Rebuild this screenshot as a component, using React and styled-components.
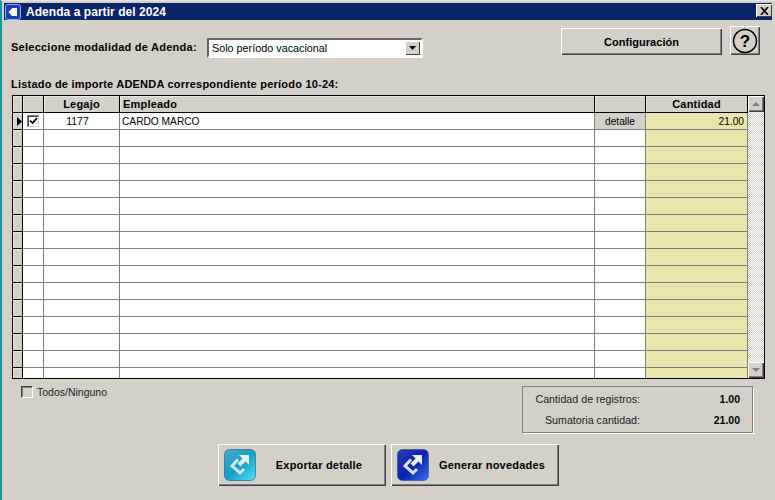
import styled, { createGlobalStyle } from "styled-components";

const GlobalStyle = createGlobalStyle`
  html, body {
    margin: 0;
    padding: 0;
    background: #d4d0c8;
    overflow: hidden;
  }
  body {
    font-family: "Liberation Sans", Arial, sans-serif;
    font-size: 11px;
    color: #000;
  }
`;

const Frame = styled.div`
  width: 775px;
  height: 500px;
  box-sizing: border-box;
  background: #d4d0c8;
  border-left: 2px solid #0f9a9e;
  border-top: 1px solid #e8e6e0;
  display: flex;
  flex-direction: column;
  overflow: hidden;
`;

const TitleBar = styled.div`
  height: 17px;
  margin: 2px 3px 0 2px;
  background: #0a246a;
  color: #fff;
  display: flex;
  align-items: center;
  padding: 0 0 0 1px;
  gap: 5px;
  font-size: 12px;
  font-weight: 700;
  letter-spacing: 0.05px;
`;

const TitleText = styled.span`
  flex: 1;
`;

const CloseBtn = styled.div`
  width: 16px;
  height: 13px;
  margin-bottom: 2px;
  background: #d4d0c8;
  box-shadow: inset 1px 1px 0 #fff, inset -1px -1px 0 #404040;
  display: flex;
  align-items: center;
  justify-content: center;
`;

const Content = styled.div`
  flex: 1;
  display: flex;
  flex-direction: column;
  padding: 0 0 0 9px;
`;

const TopRow = styled.div`
  height: 48px;
  margin-top: 7px;
  display: flex;
  align-items: flex-start;
`;

const ModeLabel = styled.label`
  font-weight: 700;
  font-size: 11px;
  letter-spacing: 0.25px;
  margin-top: 14px;
  width: 196px;
`;

const SelectBox = styled.div`
  width: 216px;
  height: 20px;
  margin-top: 11px;
  box-sizing: border-box;
  background: #fff;
  border: 2px solid;
  border-color: #666 #fff #fff #666;
  display: flex;
  align-items: center;
  padding-left: 3px;
  font-size: 10.8px;
`;

const SelectValue = styled.span`
  flex: 1;
`;

const SelectArrow = styled.span`
  width: 15px;
  height: 14px;
  margin-right: 1px;
  background: #d4d0c8;
  box-shadow: inset 1px 1px 0 #fff, inset -1px -1px 0 #404040;
  display: flex;
  align-items: center;
  justify-content: center;
`;

const Raised = styled.button`
  font-family: inherit;
  background: #d4d0c8;
  border: 0;
  padding: 0;
  box-sizing: border-box;
  box-shadow: inset 1px 1px 0 #fff, inset -1px -1px 0 #404040,
    inset -2px -2px 0 #808080;
  color: #000;
  font-weight: 700;
  font-size: 11px;
`;

const ConfigBtn = styled(Raised)`
  width: 161px;
  height: 27px;
  margin-left: 138px;
  margin-top: 1px;
  letter-spacing: 0.05px;
`;

const HelpBtn = styled(Raised)`
  width: 30px;
  height: 29px;
  margin-left: 8px;
  margin-top: -1px;
  display: flex;
  align-items: center;
  justify-content: center;
`;

const ListTitle = styled.div`
  font-weight: 700;
  font-size: 11px;
  letter-spacing: 0.22px;
  height: 13px;
  line-height: 13px;
  margin-top: 3px;
`;

const GridBox = styled.div`
  width: 753px;
  height: 284px;
  margin: 4px 0 0 1px;
  box-sizing: border-box;
  border: 1px solid #000;
  display: flex;
  background: #fff;
  overflow: hidden;
`;

const Table = styled.div`
  width: 735px;
  display: grid;
  grid-template-columns: 10px 21px 76px 475px 51px 102px;
  grid-auto-rows: 17px;
  align-content: start;
`;

const HeadCell = styled.div`
  background: #d4d0c8;
  box-sizing: border-box;
  border-right: 1px solid #000;
  border-bottom: 1px solid #000;
  box-shadow: inset 1px 1px 0 #e8e6e0;
  font-weight: 700;
  font-size: 11px;
  letter-spacing: 0.2px;
  text-align: ${({ $left }) => ($left ? "left" : "center")};
  padding-left: ${({ $left }) => ($left ? "3px" : "0")};
  line-height: 16px;
`;

const Marker = styled.div`
  background: #d4d0c8;
  box-sizing: border-box;
  border-right: 1px solid #000;
  border-bottom: 1px solid #000;
  box-shadow: inset 1px 1px 0 #e8e6e0;
  display: flex;
  align-items: center;
  justify-content: flex-end;
`;

const Cell = styled.div`
  box-sizing: border-box;
  background: ${({ $bg }) => $bg || "#fff"};
  border-right: 1px solid #808080;
  border-bottom: 1px solid #808080;
  font-size: 10.2px;
  line-height: 17px;
  padding: 0 ${({ $right }) => ($right ? "3px" : "2px")};
  text-align: ${({ $right, $center }) =>
    $right ? "right" : $center ? "center" : "left"};
  display: ${({ $flex }) => ($flex ? "flex" : "block")};
  align-items: center;
  justify-content: center;
`;

const LegajoCell = styled(Cell)`
  padding-right: 10px;
  font-size: 10.5px;
`;

const CheckBoxBox = styled.span`
  width: 12px;
  height: 12px;
  box-sizing: border-box;
  background: #fff;
  border: 1px solid;
  border-color: #808080 #d4d0c8 #d4d0c8 #808080;
  box-shadow: inset 1px 1px 0 #404040;
  display: flex;
  align-items: center;
  justify-content: center;
`;

const ScrollBar = styled.div`
  width: 16px;
  display: flex;
  flex-direction: column;
  background-color: #f0efec;
  background-image: conic-gradient(#d4d0c8 25%, #fff 0 50%, #d4d0c8 0 75%, #fff 0);
  background-size: 2px 2px;
`;

const ScrollBtn = styled.div`
  width: 16px;
  height: 16px;
  box-sizing: border-box;
  background: #d4d0c8;
  box-shadow: inset 1px 1px 0 #fff, inset -1px -1px 0 #404040,
    inset -2px -2px 0 #808080;
  display: flex;
  align-items: center;
  justify-content: center;
`;

const ScrollTrack = styled.div`
  flex: 1;
`;

const FooterRow = styled.div`
  display: flex;
  align-items: flex-start;
  height: 65px;
`;

const AllNone = styled.label`
  display: flex;
  align-items: center;
  gap: 4px;
  margin: 7px 0 0 10px;
  width: 500px;
  height: 12px;
  font-size: 10.5px;
  color: #222;
`;

const EmptyCheck = styled.span`
  width: 12px;
  height: 12px;
  box-sizing: border-box;
  background: #d4d0c8;
  border: 1px solid;
  border-color: #404040 #fff #fff #404040;
  box-shadow: inset 1px 1px 0 #808080;
`;

const Totals = styled.div`
  width: 231px;
  height: 47px;
  margin: 7px 0 0 1px;
  box-sizing: border-box;
  border: 1px solid #808080;
  box-shadow: 1px 1px 0 #fff;
  padding: 1px 12px 0 0;
  display: grid;
  grid-template-columns: 1fr 100px;
  grid-auto-rows: 21px;
  align-items: center;
  font-size: 10.7px;
`;

const TotalLabel = styled.span`
  text-align: right;
  color: #222;
`;

const TotalValue = styled.b`
  text-align: right;
  font-size: 10.5px;
`;

const ActionRow = styled.div`
  display: flex;
  gap: 5px;
  margin-left: 207px;
`;

const ActionBtn = styled(Raised)`
  width: 168px;
  height: 42px;
  display: flex;
  align-items: center;
  padding-left: 6px;
`;

const ActionLabel = styled.span`
  flex: 1;
  text-align: center;
  padding-right: 4px;
  letter-spacing: 0.2px;
`;

const columns = ["Legajo", "Empleado", "", "Cantidad"];
const emptyRows = Array.from({ length: 15 });

function ArrowIcon({ stops, id }) {
  return (
    <svg width="32" height="32" viewBox="0 0 32 32">
      <defs>
        <linearGradient id={id} x1="0" y1="0" x2="1" y2="1">
          <stop offset="0" stopColor={stops[0]} />
          <stop offset="0.5" stopColor={stops[1]} />
          <stop offset="1" stopColor={stops[2]} />
        </linearGradient>
      </defs>
      <rect x="0.5" y="0.5" width="31" height="31" rx="5" fill={`url(#${id})`} stroke="#24508a" strokeWidth="0.6" />
      <path d="M15 6h10v10z" fill="#e6eef2" />
      <path d="M21.5 9.5L15 16" stroke="#e6eef2" strokeWidth="4" fill="none" />
      <path d="M14 10.5L8 17l8 7 4-4" stroke="#d8e4ea" strokeWidth="3" fill="none" />
    </svg>
  );
}

function App() {
  return (
    <Frame>
      <GlobalStyle />
      <TitleBar>
        <svg width="16" height="16" viewBox="0 0 16 16">
          <rect x="0.5" y="0.5" width="15" height="15" rx="2" fill="#1d3fb4" stroke="#8fb0e6" />
          <path d="M3.5 8l4-4h4.5v8H7z" fill="#fff" />
        </svg>
        <TitleText>Adenda a partir del 2024</TitleText>
        <CloseBtn>
          <svg width="9" height="8" viewBox="0 0 9 8">
            <path d="M1 0l7 8M8 0L1 8" stroke="#000" strokeWidth="1.6" fill="none" />
          </svg>
        </CloseBtn>
      </TitleBar>
      <Content>
        <TopRow>
          <ModeLabel>Seleccione modalidad de Adenda:</ModeLabel>
          <SelectBox>
            <SelectValue>Solo período vacacional</SelectValue>
            <SelectArrow>
              <svg width="7" height="4" viewBox="0 0 7 4"><path d="M0 0h7L3.5 4z" fill="#000" /></svg>
            </SelectArrow>
          </SelectBox>
          <ConfigBtn>Configuración</ConfigBtn>
          <HelpBtn>
            <svg width="26" height="26" viewBox="0 0 26 26">
              <circle cx="13" cy="13" r="11.5" fill="none" stroke="#000" strokeWidth="1.5" />
              <text x="13" y="19" textAnchor="middle" fontSize="17" fontWeight="700" fontFamily="Liberation Sans">?</text>
            </svg>
          </HelpBtn>
        </TopRow>
        <ListTitle>Listado de importe ADENDA correspondiente período 10-24:</ListTitle>
        <GridBox>
          <Table>
            <Marker />
            <HeadCell />
            {columns.map((name) => (
              <HeadCell key={name || "blank"} $left={name === "Empleado"}>{name}</HeadCell>
            ))}

            <Marker>
              <svg width="5" height="9" viewBox="0 0 5 9"><path d="M0 0l5 4.5L0 9z" fill="#000" /></svg>
            </Marker>
            <Cell $flex>
              <CheckBoxBox>
                <svg width="9" height="8" viewBox="0 0 9 8"><path d="M1 3.5l2.5 2.5L8 1" stroke="#000" strokeWidth="1.7" fill="none" /></svg>
              </CheckBoxBox>
            </Cell>
            <LegajoCell $center>1177</LegajoCell>
            <Cell>CARDO MARCO</Cell>
            <Cell $center $bg="#d4d0c8">detalle</Cell>
            <Cell $right $bg="#e8e6ac">21.00</Cell>

            {emptyRows.map((_, i) => [
              <Marker key={`m${i}`} />,
              <Cell key={`a${i}`} />,
              <Cell key={`b${i}`} />,
              <Cell key={`c${i}`} />,
              <Cell key={`d${i}`} />,
              <Cell key={`e${i}`} $bg="#e8e6ac" />,
            ])}
          </Table>
          <ScrollBar>
            <ScrollBtn>
              <svg width="8" height="4" viewBox="0 0 8 4"><path d="M4 0l4 4H0z" fill="#808080" /></svg>
            </ScrollBtn>
            <ScrollTrack />
            <ScrollBtn>
              <svg width="8" height="4" viewBox="0 0 8 4"><path d="M0 0h8L4 4z" fill="#808080" /></svg>
            </ScrollBtn>
          </ScrollBar>
        </GridBox>
        <FooterRow>
          <AllNone>
            <EmptyCheck />
            Todos/Ninguno
          </AllNone>
          <Totals>
            <TotalLabel>Cantidad de registros:</TotalLabel>
            <TotalValue>1.00</TotalValue>
            <TotalLabel>Sumatoria cantidad:</TotalLabel>
            <TotalValue>21.00</TotalValue>
          </Totals>
        </FooterRow>
        <ActionRow>
          <ActionBtn>
            <ArrowIcon id="cyanIcon" stops={["#4aa8c8", "#12a0c8", "#50e4f4"]} />
            <ActionLabel>Exportar detalle</ActionLabel>
          </ActionBtn>
          <ActionBtn>
            <ArrowIcon id="blueIcon" stops={["#2a3fb0", "#0a20b0", "#3a70f0"]} />
            <ActionLabel>Generar novedades</ActionLabel>
          </ActionBtn>
        </ActionRow>
      </Content>
    </Frame>
  );
}

export default App;
